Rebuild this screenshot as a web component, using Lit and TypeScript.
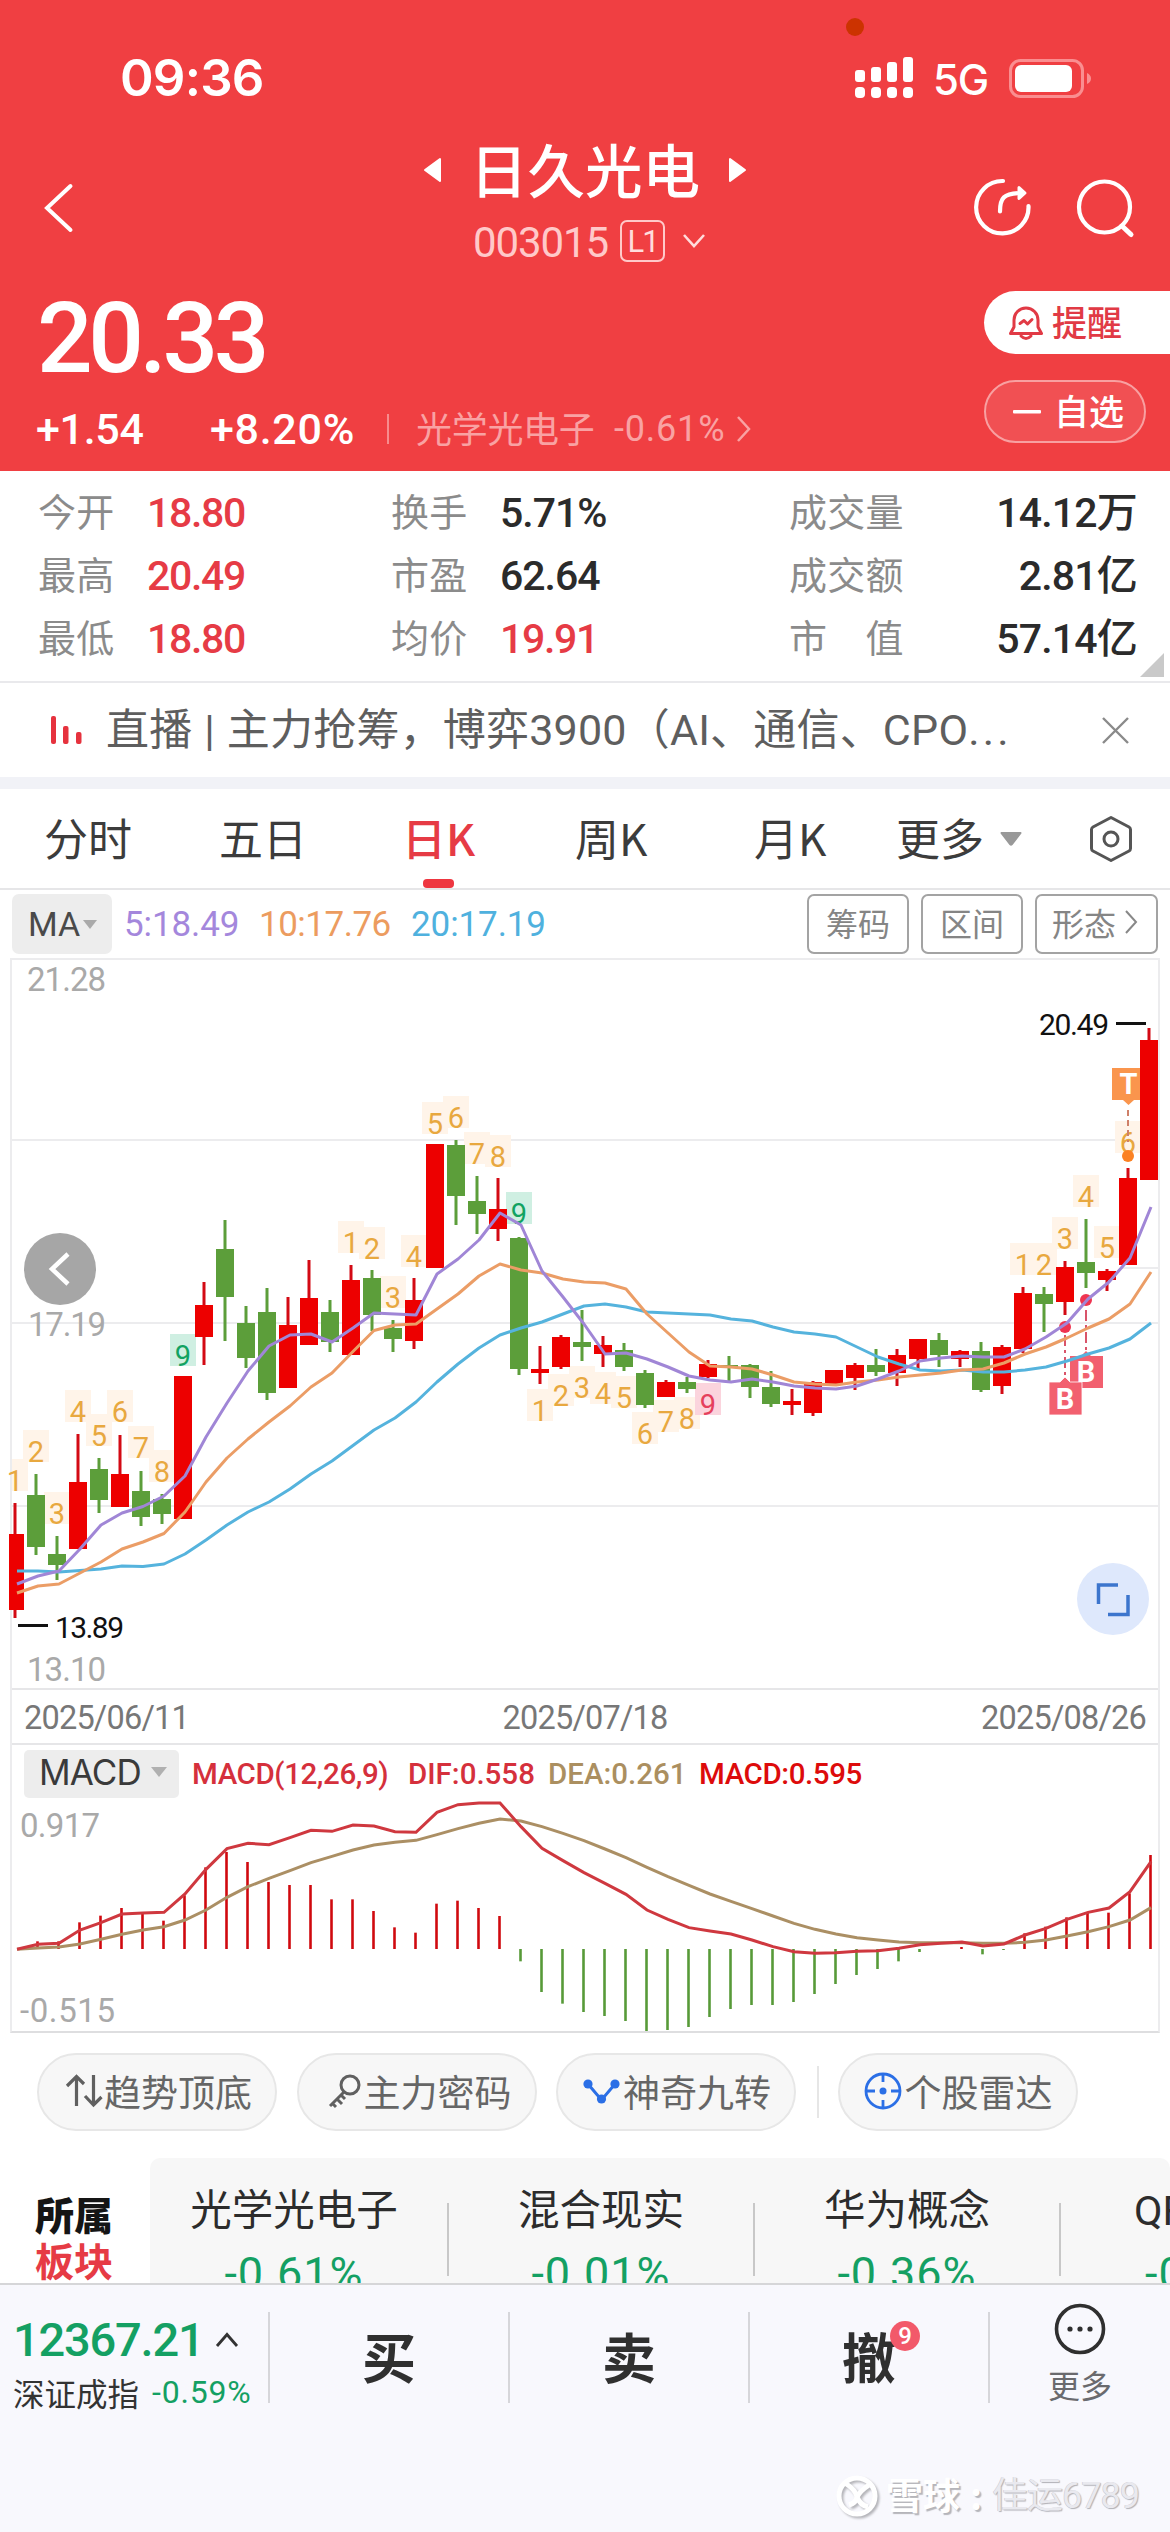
import { LitElement, html, svg, css, nothing } from "lit";
import { customElement } from "lit/decorators.js";

const STEP = 21;
const GRID_X = 15;
const LINE_X = 17;

type Candle = [up: number, high: number, top: number, bottom: number, low: number];

const CANDLES: Candle[] = [
  [1, 1503, 1534, 1610, 1618], [0, 1474, 1495, 1547, 1555], [0, 1536, 1554, 1565, 1580],
  [1, 1434, 1482, 1549, 1549], [0, 1458, 1469, 1500, 1513], [1, 1435, 1474, 1507, 1507],
  [0, 1471, 1491, 1517, 1526], [0, 1494, 1499, 1514, 1524], [1, 1376, 1376, 1519, 1519],
  [1, 1282, 1305, 1337, 1365], [0, 1220, 1249, 1297, 1341], [0, 1306, 1323, 1358, 1368],
  [0, 1288, 1312, 1393, 1400], [1, 1297, 1325, 1388, 1388], [1, 1260, 1298, 1345, 1345],
  [0, 1300, 1312, 1342, 1352], [1, 1265, 1280, 1355, 1355], [0, 1270, 1278, 1315, 1331],
  [0, 1320, 1328, 1339, 1352], [1, 1278, 1300, 1341, 1349], [1, 1144, 1144, 1268, 1268],
  [0, 1140, 1145, 1196, 1225], [0, 1176, 1201, 1214, 1234], [1, 1178, 1209, 1229, 1241],
  [0, 1237, 1238, 1369, 1375], [1, 1346, 1369, 1373, 1384], [1, 1335, 1337, 1367, 1369],
  [0, 1310, 1342, 1347, 1361], [1, 1336, 1345, 1354, 1367], [0, 1343, 1350, 1367, 1371],
  [0, 1370, 1373, 1405, 1408], [1, 1380, 1382, 1397, 1397], [0, 1377, 1382, 1389, 1393],
  [1, 1360, 1364, 1377, 1378], [0, 1356, 1365, 1367, 1382], [0, 1364, 1365, 1387, 1398],
  [0, 1371, 1387, 1404, 1407], [1, 1389, 1401, 1405, 1415], [1, 1381, 1382, 1413, 1416],
  [1, 1370, 1370, 1384, 1384], [1, 1363, 1365, 1378, 1390], [0, 1349, 1365, 1372, 1376],
  [1, 1349, 1355, 1373, 1386], [1, 1339, 1339, 1359, 1369], [0, 1333, 1340, 1355, 1367],
  [1, 1350, 1351, 1359, 1367], [0, 1342, 1351, 1390, 1392], [1, 1345, 1347, 1386, 1394],
  [1, 1287, 1293, 1349, 1353], [0, 1287, 1294, 1304, 1332], [1, 1261, 1267, 1302, 1315],
  [0, 1219, 1262, 1273, 1288], [1, 1269, 1271, 1280, 1291], [1, 1168, 1178, 1265, 1265],
  [1, 1028, 1040, 1180, 1180],
];

const MA5 = [1584, 1576, 1571, 1549, 1525, 1513, 1506.5, 1496, 1476, 1437, 1403, 1371, 1346, 1335, 1334, 1342, 1328, 1313, 1314, 1315, 1274, 1259, 1240, 1213, 1225, 1271, 1297, 1324, 1354, 1353, 1359, 1367, 1376, 1380, 1382, 1379, 1382, 1386, 1388, 1389, 1386, 1379, 1371, 1361, 1358, 1356, 1357, 1357, 1349, 1337, 1323, 1299, 1282, 1258, 1207];
const MA10 = [1593, 1586, 1584, 1573, 1562, 1549, 1542, 1533.5, 1512, 1482, 1458, 1439, 1422, 1406, 1387, 1373, 1351.5, 1330.5, 1325, 1324, 1309, 1294, 1276, 1264, 1270, 1273, 1279, 1282, 1283, 1289, 1314, 1333, 1352, 1366, 1367, 1369, 1375, 1382, 1384, 1385, 1382, 1380, 1377, 1375, 1373, 1370, 1369, 1363, 1354, 1347, 1338, 1328, 1319, 1304, 1272];
const MA20 = [1571, 1571, 1572, 1570.5, 1569, 1566, 1566.5, 1564, 1554, 1540, 1525, 1512, 1502, 1489, 1474, 1461, 1445.5, 1430, 1418, 1402, 1382, 1364, 1348, 1335, 1328, 1322, 1314, 1306, 1304, 1307, 1312, 1313, 1314, 1315, 1319, 1321, 1327, 1332, 1334, 1337, 1347, 1357, 1364, 1370, 1371, 1370, 1372, 1372, 1370, 1367, 1361, 1354, 1348, 1339, 1323];

// Setup counters: candle index, vertical centre, digit, tone.
const COUNTS: [number, number, string, string][] = [
  [0, 1480, "1", "amber"], [1, 1451, "2", "amber"], [2, 1513, "3", "amber"], [3, 1411, "4", "amber"],
  [4, 1435, "5", "amber"], [5, 1411, "6", "amber"], [6, 1447, "7", "amber"], [7, 1471, "8", "amber"],
  [8, 1355, "9", "mint"], [16, 1242, "1", "amber"], [17, 1248, "2", "amber"], [18, 1297, "3", "amber"],
  [19, 1256, "4", "amber"], [20, 1123, "5", "amber"], [21, 1117, "6", "amber"], [22, 1153, "7", "amber"],
  [23, 1156, "8", "amber"], [24, 1213, "9", "mint"], [25, 1410, "1", "amber"], [26, 1395, "2", "amber"],
  [27, 1387, "3", "amber"], [28, 1393, "4", "amber"], [29, 1397, "5", "amber"], [30, 1433, "6", "amber"],
  [31, 1421, "7", "amber"], [32, 1418, "8", "amber"], [33, 1404, "9", "rose"], [48, 1264, "1", "amber"],
  [49, 1264, "2", "amber"], [50, 1238, "3", "amber"], [51, 1196, "4", "amber"], [52, 1247, "5", "amber"],
  [53, 1142, "6", "amber"],
];

// MACD series in thirds of a pixel below y = 1560.
const ZERO = 1167;
const BARS = [0, 1144, 1144, 1087, 1067, 1044, 1060, 1082, 1006, 922, 876, 906, 966, 975, 975, 1018, 1018, 1053, 1102, 1118, 1031, 1022, 1044, 1068, 1204, 1296, 1331, 1356, 1368, 1383, 1413, 1410, 1401, 1371, 1347, 1335, 1335, 1326, 1302, 1272, 1245, 1227, 1204, 1176, 0, 1161, 1183, 1170, 1120, 1100, 1072, 1056, 1058, 1000, 885];
const DIF = [1168, 1153, 1150, 1110, 1088, 1062, 1059, 1057, 1002, 928, 866, 850, 854, 833, 811, 814, 795, 798, 815, 817, 757, 734, 729, 729, 800, 865, 902, 938, 970, 1003, 1050, 1078, 1103, 1113, 1122, 1140, 1160, 1175, 1180, 1178, 1174, 1172, 1165, 1154, 1150, 1146, 1158, 1152, 1125, 1105, 1078, 1057, 1044, 995, 905];
const DEA = [1168, 1164, 1161, 1152, 1138, 1123, 1110, 1100, 1080, 1050, 1012, 980, 955, 932, 908, 889, 870, 855, 847, 841, 824, 806, 790, 777, 783, 800, 820, 842, 867, 893, 922, 950, 976, 1002, 1024, 1046, 1068, 1090, 1108, 1122, 1133, 1140, 1146, 1148, 1148, 1148, 1150, 1150, 1147, 1140, 1128, 1115, 1100, 1080, 1043];

const macdY = (v: number) => 1560 + v / 3;
const polyline = (ys: number[]) => ys.map((y, i) => `${LINE_X + STEP * i},${y}`).join(" ");

const fontBase = css`
  :host { box-sizing: border-box; flex: none; }
  * { box-sizing: border-box; }
  svg { display: block; overflow: visible; flex: none; }
`;

@customElement("quote-header")
export class QuoteHeader extends LitElement {
  static styles = [fontBase, css`
    :host { display: block; height: 471px; background: #f03f42; color: #fff; position: relative; }
    .privacy { position: absolute; left: 846px; top: 18px; width: 18px; height: 18px; border-radius: 50%; background: #cc3300; }
    .status { height: 120px; padding: 36px 78px 0 120px; display: flex; align-items: center; }
    .clock { font: 600 51px/84px Inter, sans-serif; letter-spacing: -0.8px; flex: 1; }
    .signal { margin-right: 20px; }
    .network { font: 500 42px/84px Inter, sans-serif; letter-spacing: -1.2px; margin-right: 21px; padding-top: 4px; }
    .nav { height: 160px; display: grid; grid-template-columns: 423px 324px 1fr; }
    .back { padding: 64px 0 0 44px; }
    .center { display: flex; flex-direction: column; align-items: center; }
    .title-row { display: flex; width: 324px; height: 100px; justify-content: space-between; align-items: center; }
    .title { font: 500 57.5px/100px "Noto Sans CJK SC", sans-serif; margin-top: -4px; }
    .code-row { display: flex; align-items: center; height: 42px; align-self: flex-start; padding-left: 50px; }
    .code { font: 400 42px/42px Roboto, sans-serif; color: #ffc9c9; letter-spacing: -1.1px; width: 147px; padding-top: 3px; }
    .level { width: 45px; height: 42px; border: 2px solid #ffc9c9; border-radius: 7px; font: 400 31px/39px Roboto, sans-serif; text-align: center; color: #ffdcdc; margin-right: 18px; letter-spacing: -2px; }
    .tools { display: flex; gap: 44px; padding: 57px 0 0 226px; }
    .body { display: grid; grid-template-columns: 984px 1fr; height: 191px; }
    .price { font: 500 98px/110px Roboto, sans-serif; letter-spacing: -4.4px; padding: 4px 0 0 37px; height: 119px; }
    .delta { display: flex; align-items: center; height: 60px; padding-left: 36px; font: 500 43px/60px Roboto, sans-serif; letter-spacing: -0.3px; }
    .amount { width: 174px; }
    .percent { width: 177px; letter-spacing: 0.7px; }
    .rule { width: 2px; height: 30px; background: #f78c8d; margin-right: 27px; }
    .sector { font: 400 36px/54px "Noto Sans CJK SC", sans-serif; color: #f9a2a3; width: 198px; letter-spacing: -0.3px; margin-top: -4px; }
    .sector-pct { font: 400 36px/60px Roboto, sans-serif; color: #f9a2a3; width: 123px; letter-spacing: 0.8px; }
    .pills { padding-top: 11px; display: flex; flex-direction: column; gap: 26px; }
    .pill { height: 63px; display: flex; align-items: center; font: 500 35px/60px "Noto Sans CJK SC", sans-serif; }
    .pill span { margin-top: -3px; }
    .remind { background: #fff; color: #e13a45; border-radius: 32px 0 0 32px; padding-left: 25px; gap: 9px; }
    .watch { width: 162px; border: 2px solid #f8a0a1; background: #f15053; border-radius: 32px; padding-left: 27px; gap: 13px; }
  `];

  render() {
    return html`
      <i class="privacy"></i>
      <div class="status">
        <span class="clock">09:36</span>
        <svg class="signal" width="58" height="42" viewBox="0 0 58 42" fill="#fff">
          <rect x="0" y="13" width="10" height="12" rx="3"></rect><rect x="16" y="10" width="10" height="15" rx="3"></rect>
          <rect x="32" y="5" width="10" height="20" rx="3"></rect><rect x="48" y="0" width="10" height="25" rx="3"></rect>
          ${[0, 16, 32, 48].map((x) => svg`<rect x=${x} y="30" width="10" height="11" rx="4"></rect>`)}
        </svg>
        <span class="network">5G</span>
        <svg width="83" height="39" viewBox="0 0 83 39">
          <rect x="1.5" y="1.5" width="72" height="36" rx="10" fill="none" stroke="#fa8e90" stroke-width="3"></rect>
          <rect x="6" y="6" width="57" height="27" rx="6" fill="#fff"></rect>
          <path d="M78 14q4 2 4 5.500t-4 5.500z" fill="#fa8e90"></path>
        </svg>
      </div>
      <div class="nav">
        <div class="back"><svg width="30" height="48" viewBox="0 0 30 48"><path d="M26.500 2L3 24l23.500 22" fill="none" stroke="#fff" stroke-width="4" stroke-linecap="round"></path></svg></div>
        <div class="center">
          <div class="title-row">
            <svg width="18" height="26" viewBox="0 0 18 26"><path d="M17 2v22L2 13z" fill="#fff" stroke="#fff" stroke-width="2" stroke-linejoin="round"></path></svg>
            <span class="title">日久光电</span>
            <svg width="18" height="26" viewBox="0 0 18 26"><path d="M1 2v22l15-11z" fill="#fff" stroke="#fff" stroke-width="2" stroke-linejoin="round"></path></svg>
          </div>
          <div class="code-row">
            <span class="code">003015</span><span class="level">L1</span>
            <svg width="22" height="14" viewBox="0 0 22 14"><path d="M1 1l10 11L21 1" fill="none" stroke="#ffdcdc" stroke-width="2.600"></path></svg>
          </div>
        </div>
        <div class="tools">
          <svg width="60" height="60" viewBox="0 0 60 60" fill="none" stroke="#fff" stroke-width="4.200" stroke-linecap="round">
            <path d="M30 4A26.200 26.200 0 1 0 55.500 29"></path><path d="M27 34.500c0-13 3-18.500 22-18.500"></path>
            <path d="M46 10.500l6 5.500-6 5.500z" fill="#fff" stroke-linejoin="round" stroke-width="3"></path>
          </svg>
          <svg width="60" height="60" viewBox="0 0 60 60" fill="none" stroke="#fff" stroke-width="4.200" stroke-linecap="round">
            <circle cx="27.500" cy="30" r="25.500"></circle><path d="M45 49l9 8.500" stroke-width="5"></path>
          </svg>
        </div>
      </div>
      <div class="body">
        <div>
          <div class="price">20.33</div>
          <div class="delta">
            <span class="amount">+1.54</span><span class="percent">+8.20%</span><i class="rule"></i>
            <span class="sector">光学光电子</span><span class="sector-pct">-0.61%</span>
            <svg width="14" height="26" viewBox="0 0 14 26"><path d="M1 1l11 12L1 25" fill="none" stroke="#f9a2a3" stroke-width="2.500"></path></svg>
          </div>
        </div>
        <div class="pills">
          <div class="pill remind">
            <svg width="34" height="36" viewBox="0 0 34 36" fill="none" stroke="#e13a45" stroke-width="3" stroke-linejoin="round" stroke-linecap="round">
              <path d="M5 22V15a12 12 0 0 1 24 0v7l3.500 6.500H1.500z"></path><path d="M12 31q5 5 10 0"></path><path d="M11 18.500l4-3 3.500 3.500 4.500-4.500"></path>
            </svg>
            <span>提醒</span>
          </div>
          <div class="pill watch">
            <svg width="28" height="4" viewBox="0 0 28 4"><rect width="28" height="3.500" rx="1" fill="#fff"></rect></svg>
            <span>自选</span>
          </div>
        </div>
      </div>`;
  }
}

@customElement("quote-stats")
export class QuoteStats extends LitElement {
  static styles = [fontBase, css`
    :host { display: block; background: #fff; }
    .stats { height: 212px; padding: 9px 33px 0 38px; border-bottom: 2px solid #e9e9ec; position: relative;
      display: grid; grid-template-columns: 109px 244px 109px 289px 118px 1fr; grid-template-rows: repeat(3, 63px); align-items: center; }
    .label { font: 400 38px/60px "Noto Sans CJK SC", sans-serif; color: #8b8b8b; white-space: pre; letter-spacing: 0.2px; padding-bottom: 3px; }
    .value { font: 500 41px/63px Roboto, "Noto Sans CJK SC", sans-serif; color: #2b2b2b; letter-spacing: -1px; padding-top: 4px; }
    .rise { color: #e63b45; letter-spacing: -1.3px; }
    .last { text-align: right; white-space: nowrap; letter-spacing: -0.8px; }
    .corner { position: absolute; right: 6px; bottom: 4px; width: 24px; height: 24px; background: #c9c9c9; clip-path: polygon(100% 0, 100% 100%, 0 100%); }
    .news { height: 94px; display: flex; align-items: center; padding: 0 41px 0 51px; }
    .news-text { font: 400 43px/94px Roboto, "Noto Sans CJK SC", sans-serif; color: #5e5e5e; margin-left: 24px; flex: 1; white-space: nowrap; letter-spacing: 0.2px; }
    .bar { margin: 0 1px; }
    .dots { letter-spacing: 3.200px; }
    .band { height: 12px; background: #f1f2f7; }
  `];

  private rows = [
    ["今开", "18.80", 1, "换手", "5.71%", 0, "成交量", "14.12万"],
    ["最高", "20.49", 1, "市盈", "62.64", 0, "成交额", "2.81亿"],
    ["最低", "18.80", 1, "均价", "19.91", 1, "市　值", "57.14亿"],
  ];

  render() {
    return html`
      <div class="stats">
        ${this.rows.map(([a, av, ar, b, bv, br, c, cv]) => html`
          <span class="label">${a}</span><span class="value ${ar ? "rise" : ""}">${av}</span>
          <span class="label">${b}</span><span class="value ${br ? "rise" : ""}">${bv}</span>
          <span class="label">${c}</span><span class="value last">${cv}</span>`)}
        <i class="corner"></i>
      </div>
      <div class="news">
        <svg width="31" height="28" viewBox="0 0 31 28" fill="#e6323e">
          <rect x="0" y="0" width="5" height="28" rx="2"></rect><rect x="12" y="10" width="5.500" height="18" rx="2"></rect><rect x="25" y="16" width="5.500" height="12" rx="2"></rect>
        </svg>
        <span class="news-text">直播 <span class="bar">|</span> 主力抢筹，博弈3900（AI、通信、CPO<span class="dots">...</span></span>
        <svg width="27" height="27" viewBox="0 0 27 27"><path d="M1 1l25 25M26 1L1 26" stroke="#8a8a8a" stroke-width="2.400"></path></svg>
      </div>
      <div class="band"></div>`;
  }
}

@customElement("period-tabs")
export class PeriodTabs extends LitElement {
  static styles = [fontBase, css`
    :host { display: block; background: #fff; }
    .tabs { height: 101px; border-bottom: 2px solid #e6e6e8; padding-left: 44px; display: grid; align-items: center;
      grid-template-columns: 175px 183px 173px 179px 142px 193px 1fr; font: 400 44px/96px "Noto Sans CJK SC", sans-serif; color: #3c3c3c; }
    .tab { white-space: nowrap; display: flex; align-items: center; height: 99px; padding-bottom: 3px; }
    .active { color: #e63b45; font-weight: 500; position: relative; }
    .active::after { content: ""; position: absolute; left: 21px; bottom: 0; width: 31px; height: 9px; border-radius: 4px; background: #ee3640; }
    .down { margin: 4px 0 0 16px; }
    .tools { height: 68px; display: flex; align-items: center; padding: 0 12px; }
    .ma { width: 100px; height: 60px; background: #ededed; border-radius: 7px; padding-left: 16px; display: flex; align-items: center; gap: 3px; font: 400 34px/60px Roboto, sans-serif; color: #4a4a4a; margin-right: 12px; }
    .series { font: 400 35px/60px Roboto, sans-serif; letter-spacing: -0.1px; white-space: nowrap; padding-top: 1px; }
    .v5 { color: #a487dc; width: 135px; }
    .v10 { color: #ec9c5f; width: 152px; letter-spacing: -0.5px; }
    .v20 { color: #4fb1de; flex: 1; }
    .key { height: 60px; border: 2px solid #a3a3a3; border-radius: 7px; font: 400 32px/52px "Noto Sans CJK SC", sans-serif; color: #858585; display: flex; justify-content: center; align-items: center; width: 102px; margin-left: 12px; gap: 9px; padding-bottom: 5px; }
    .wide { width: 123px; padding-right: 3px; }
  `];

  render() {
    return html`
      <div class="tabs">
        <span class="tab">分时</span><span class="tab">五日</span><span class="tab active">日K</span><span class="tab">周K</span><span class="tab">月K</span>
        <span class="tab">更多<svg class="down" width="22" height="14" viewBox="0 0 22 14"><path d="M1 0h20q1 1 0 2L12.500 13q-1.500 1.500-3 0L1 2q-1-1 0-2z" fill="#999"></path></svg></span>
        <svg width="44" height="48" viewBox="0 0 44 48" fill="none" stroke="#555" stroke-width="3" stroke-linejoin="round">
          <path d="M22 2.500L40 12q1.500 1 1.500 2.500v19q0 1.500-1.500 2.500L22 45.500 4 36q-1.500-1-1.500-2.500v-19Q2.500 13 4 12z"></path><circle cx="22" cy="24" r="7"></circle>
        </svg>
      </div>
      <div class="tools">
        <span class="ma">MA<svg width="14" height="9" viewBox="0 0 14 9"><path d="M0 0h14L7 9z" fill="#aaa"></path></svg></span>
        <span class="series v5">5:18.49</span><span class="series v10">10:17.76</span><span class="series v20">20:17.19</span>
        <span class="key">筹码</span><span class="key">区间</span>
        <span class="key wide">形态<svg width="13" height="24" viewBox="0 0 13 24"><path d="M1 1l10 11L1 23" fill="none" stroke="#888" stroke-width="2"></path></svg></span>
      </div>`;
  }
}

@customElement("kline-chart")
export class KlineChart extends LitElement {
  static styles = [fontBase, css`
    :host { display: block; background: #fff; height: 1077px; padding: 0 10px; }
    .frame { border: 2px solid #ececee; border-bottom-color: #dedee0; height: 1075px; position: relative; }
    .num { font-family: Roboto, sans-serif; }
    .axis { fill: #a9a9a9; font-size: 33px; }
    .peak { fill: #111; font-size: 30px; }
    .count { font-size: 29px; text-anchor: middle; font-weight: 400; }
    .amber { fill: #e8a83f; } .amber-box { fill: #fff4e9; }
    .mint { fill: #12a261; } .mint-box { fill: #cfefe2; }
    .rose { fill: #e5405c; } .rose-box { fill: #fbd4dd; }
    .flag { font-size: 29px; font-weight: 700; fill: #fff; text-anchor: middle; }
    .dates { height: 57px; border-top: 2px solid #e6e6e8; border-bottom: 2px solid #e6e6e8; display: flex; justify-content: space-between; padding: 2px 12px 0 12px; font: 400 32.500px/53px Roboto, sans-serif; color: #777; letter-spacing: -0.8px; }
    .legend { height: 57px; display: flex; align-items: center; padding-left: 12px; font: 500 29.500px/54px Roboto, sans-serif; white-space: nowrap; }
    .picker { width: 155px; height: 48px; background: #ededed; border-radius: 5px; font: 400 35px/44px Inter, sans-serif; color: #3a3a3a; display: flex; align-items: center; padding-left: 15px; gap: 10px; margin-right: 13px; letter-spacing: -0.9px; padding-bottom: 3px; }
    .l1 { color: #d5303c; width: 216px; letter-spacing: -0.4px; } .l2 { color: #d5303c; width: 140px; letter-spacing: 0; }
    .l3 { color: #ab8f60; width: 151px; letter-spacing: 0; } .l4 { color: #dd0b0b; letter-spacing: -0.4px; }
    .prev { position: absolute; left: 12px; top: 273px; }
    .expand { position: absolute; left: 1065px; top: 603px; }
  `];

  private candle([up, high, top, bottom, low]: Candle, i: number) {
    const x = GRID_X + STEP * i;
    const left = i === 0 ? 9 : x - 9;
    return svg`<g fill=${up ? "#ed0000" : "#5c9e3a"}>
      <rect x=${x - 1.5} y=${high} width="3" height=${low - high} fill=${up ? "#d30a14" : "#5c9e3a"}></rect>
      <rect x=${left} y=${top} width=${x + 9 - left} height=${bottom - top}></rect></g>`;
  }

  private count([i, cy, , tone]: [number, number, string, string]) {
    const x = GRID_X + STEP * i;
    return svg`<rect class="${tone}-box" x=${i === 0 ? 12 : x - 13} y=${cy - 21} width=${i === 0 ? 16 : 26} height="32"></rect>`;
  }

  private digit([i, cy, digit, tone]: [number, number, string, string]) {
    return svg`<text class="num count ${tone}" x=${GRID_X + STEP * i} y=${cy + 10.5}>${digit}</text>`;
  }

  render() {
    return html`
      <div class="frame">
        <svg width="1146" height="728" viewBox="12 960 1146 728">
          <g stroke="#ececee" stroke-width="2"><path d="M12 1140H1158M12 1323H1158M12 1506H1158M1120 1268H1158"></path></g>
          <text class="num axis" x="27" y="991" textLength="79">21.28</text>
          <text class="num axis" x="28" y="1336" textLength="78">17.19</text>
          <text class="num axis" x="27" y="1681" textLength="79">13.10</text>
          ${COUNTS.map((c) => this.count(c))}
          ${COUNTS.map((c) => this.digit(c))}
          <path d="M1112 1068h33v32h-11l-5.500 5-5.500-5h-11z" fill="#fa954d"></path>
          <text class="num flag" x="1128.500" y="1094">T</text>
          <path d="M1128 1110V1142" stroke="#cf8068" stroke-width="2" stroke-dasharray="6 4"></path>
          ${CANDLES.map((c, i) => this.candle(c, i))}
          <circle cx="1128" cy="1156" r="6" fill="#fb8122"></circle>
          <path d="M1065 1335V1378M1086 1310V1350" stroke="#d9546a" stroke-width="2" stroke-dasharray="11 4 3 4"></path>
          <circle cx="1065" cy="1327" r="6" fill="#ef3450"></circle><circle cx="1086" cy="1300" r="6" fill="#ef3450"></circle>
          <path d="M1070 1356h11l5-5 5 5h12v32h-33z" fill="#f2606f"></path><text class="num flag" x="1086" y="1382">B</text>
          <path d="M1049 1382h11l5-5 5 5h12v33h-33z" fill="#f2606f" stroke="#fff" stroke-width="0.800"></path><text class="num flag" x="1065" y="1409">B</text>
          <g fill="none" stroke-width="3" stroke-linejoin="round">
            <polyline points=${polyline(MA20)} stroke="#55b3dd"></polyline>
            <polyline points=${polyline(MA10)} stroke="#eb9d66"></polyline>
            <polyline points=${polyline(MA5)} stroke="#a086d6"></polyline>
          </g>
          <path d="M1116 1023.500h30M18 1625.500h30" stroke="#111" stroke-width="3"></path>
          <text class="num peak" x="1039" y="1035" textLength="70">20.49</text>
          <text class="num peak" x="55" y="1638" textLength="69">13.89</text>
        </svg>
        <div class="dates"><span>2025/06/11</span><span>2025/07/18</span><span>2025/08/26</span></div>
        <div class="legend">
          <span class="picker">MACD<svg width="16" height="10" viewBox="0 0 16 10"><path d="M0 0h16L8 10z" fill="#b0b0b0"></path></svg></span>
          <span class="l1">MACD(12,26,9)</span><span class="l2">DIF:0.558</span><span class="l3">DEA:0.261</span><span class="l4">MACD:0.595</span>
        </div>
        <svg width="1146" height="229" viewBox="12 1802 1146 229">
          <text class="num axis" x="20" y="1837" textLength="80">0.917</text>
          <text class="num axis" x="20" y="2022" textLength="95">-0.515</text>
          ${BARS.map((v, i) => v === 0 ? nothing : svg`<path d="M${16.5 + STEP * i} ${macdY(ZERO)}V${macdY(v)}" stroke=${v < ZERO ? "#d0090f" : "#579a38"} stroke-width="2.600"></path>`)}
          <polyline points=${polyline(DEA.map(macdY))} fill="none" stroke="#ab8f64" stroke-width="3"></polyline>
          <polyline points=${polyline(DIF.map(macdY))} fill="none" stroke="#cf383f" stroke-width="3"></polyline>
        </svg>
        <svg class="prev" width="72" height="72" viewBox="0 0 72 72"><circle cx="36" cy="36" r="36" fill="#a6a6a6"></circle><path d="M44 21L28 36l16 15" fill="none" stroke="#fff" stroke-width="4.500"></path></svg>
        <svg class="expand" width="72" height="72" viewBox="0 0 72 72"><circle cx="36" cy="36" r="36" fill="#dee8fc"></circle><path d="M41 22H21.500V41M31 51.500H51V32" fill="none" stroke="#3c75cd" stroke-width="3.500"></path></svg>
      </div>`;
  }
}

@customElement("feature-chips")
export class FeatureChips extends LitElement {
  static styles = [fontBase, css`
    :host { display: flex; height: 123px; padding: 18px 0 0 37px; background: #fff; align-items: flex-start; }
    .chip { width: 240px; height: 78px; margin-right: 19.500px; border: 2px solid #e7e7e7; background: #f7f7f7; border-radius: 39px; display: flex; align-items: center; justify-content: flex-end; padding: 0 23px 2px 0; gap: 2px; font: 400 37px/70px "Noto Sans CJK SC", sans-serif; color: #666; white-space: nowrap; }
    .gap { width: 2px; height: 52px; background: #e6e6e6; margin: 13px 19px 0 1px; }
  `];

  render() {
    return html`
      <div class="chip"><svg width="37" height="34" viewBox="0 0 37 34" fill="none" stroke="#606060" stroke-width="3.200"><path d="M11.500 32V3M2 12L11.500 2.500 19 10M28.500 1v29M20 22l8.500 9 8-8"></path></svg>趋势顶底</div>
      <div class="chip"><svg width="34" height="34" viewBox="0 0 34 34" fill="none" stroke="#606060" stroke-width="3"><circle cx="22" cy="11" r="9"></circle><path d="M16 18L2 32M9 25l5 5M4 29l4 4M13 21l4 4"></path></svg>主力密码</div>
      <div class="chip"><svg width="38" height="27" viewBox="0 0 38 27" fill="#2b6fe6"><path d="M5 6l13.500 16L32 6" fill="none" stroke="#2b6fe6" stroke-width="3"></path><circle cx="5" cy="6" r="4.600"></circle><circle cx="32" cy="6" r="4.600"></circle><circle cx="18.500" cy="21" r="4.600"></circle></svg>神奇九转</div>
      <i class="gap"></i>
      <div class="chip"><svg width="38" height="40" viewBox="0 0 38 40" fill="none" stroke="#2b6fe6" stroke-width="2.800"><circle cx="18" cy="20" r="17"></circle><path d="M18 3v8M18 29v8M1 20h9M26 20h9"></path><circle cx="18" cy="20" r="3.500" fill="#2b6fe6" stroke="none"></circle></svg>个股雷达</div>`;
  }
}

@customElement("sector-strip")
export class SectorStrip extends LitElement {
  static styles = [fontBase, css`
    :host { display: flex; height: 125px; overflow: hidden; background: #fff; }
    .heading { width: 150px; padding: 32px 0 0 35px; font: 900 39px/46px "Noto Sans CJK SC", sans-serif; color: #151515; flex: none; }
    .heading em { font-style: normal; color: #e63b45; display: block; font-weight: 700; }
    .card { width: 1020px; height: 170px; background: #f7f7f7; border-radius: 10px; display: grid; grid-template-columns: 299px 306px 306px 306px; overflow: hidden; flex: none; padding-top: 26px; }
    .cell { position: relative; text-align: center; padding-right: 11px; }
    .cell + .cell { padding: 0 2px 0 0; }
    .cell::after { content: ""; position: absolute; right: 0; top: 19px; width: 2px; height: 73px; background: #c8c8c8; }
    .name { font: 400 41.500px/54px Roboto, "Noto Sans CJK SC", sans-serif; color: #2c2c2c; }
    .pct { font: 400 45px/50px Roboto, sans-serif; color: #14a063; letter-spacing: 1px; margin-top: 11px; }
    .cell.partial { text-align: left; padding-left: 73px; }
    .partial .pct { padding-left: 11px; }
  `];

  render() {
    const cells = [["光学光电子", "-0.61%"], ["混合现实", "-0.01%"], ["华为概念", "-0.36%"]];
    return html`
      <div class="heading">所属<em>板块</em></div>
      <div class="card">
        ${cells.map(([n, p]) => html`<div class="cell"><div class="name">${n}</div><div class="pct">${p}</div></div>`)}
        <div class="cell partial"><div class="name">QF</div><div class="pct">-0</div></div>
      </div>`;
  }
}

@customElement("trade-bar")
export class TradeBar extends LitElement {
  static styles = [fontBase, css`
    :host { display: block; height: 249px; background: #f8f8fd; border-top: 2px solid #d6d6d8; }
    .bar { display: grid; grid-template-columns: 270px 240px 240px 240px 180px; padding-top: 27px; height: 154px; }
    .index { border-right: 2px solid #d6d6da; height: 91px; padding-left: 13px; }
    .line { display: flex; align-items: center; white-space: nowrap; }
    .points { font: 500 47px/56px Roboto, sans-serif; color: #14a063; letter-spacing: -1.2px; width: 203px; height: 56px; }
    .name { font: 400 31.500px/40px "Noto Sans CJK SC", sans-serif; color: #333; width: 139px; }
    .pct { font: 400 32px/40px Roboto, sans-serif; color: #14a063; letter-spacing: 0.8px; }
    .second { margin-top: 4px; }
    .act { height: 91px; border-right: 2px solid #d6d6da; font: 700 54px/87px "Noto Sans CJK SC", sans-serif; color: #303030; text-align: center; position: relative; }
    .badge { position: absolute; left: 140px; top: 9px; width: 30px; height: 30px; border-radius: 50%; background: #f2596a; color: #fff; font: 500 24px/31px Roboto, sans-serif; }
    .more { display: flex; flex-direction: column; align-items: center; margin-top: -8px; font: 400 32px/40px "Noto Sans CJK SC", sans-serif; color: #6a6a6e; gap: 10px; }
    .mark { display: flex; align-items: center; padding: 34px 0 0 836px; height: 80px; font: 700 37px/44px "Noto Sans CJK SC", sans-serif; color: #fff; text-shadow: 2px 2px 1px #b5b5ba; white-space: nowrap; }
    .brand { margin-top: -5px; width: 74px; }
    .colon { margin-top: -5px; width: 32px; text-align: center; }
    .logo { filter: drop-shadow(2px 2px 1px #b5b5ba); margin-right: 8px; }
    .user { font: 400 36px/44px Roboto, "Noto Sans CJK SC", sans-serif; color: #e9e9ef; text-shadow: 1px 1px 1px #b0b0b6, -0.500px -0.500px 0 #c9c9cf; letter-spacing: -1px; }
  `];

  render() {
    return html`
      <div class="bar">
        <div class="index">
          <div class="line"><span class="points">12367.21</span><svg width="22" height="14" viewBox="0 0 22 14"><path d="M1 13L11 1.500 21 13" fill="none" stroke="#333" stroke-width="2.800"></path></svg></div>
          <div class="line second"><span class="name">深证成指</span><span class="pct">-0.59%</span></div>
        </div>
        <div class="act">买</div><div class="act">卖</div><div class="act">撤<span class="badge">9</span></div>
        <div class="more">
          <svg width="50" height="50" viewBox="0 0 50 50"><circle cx="25" cy="25" r="23.500" fill="none" stroke="#2f2f2f" stroke-width="3.600"></circle><g fill="#2f2f2f"><circle cx="15" cy="25" r="2.600"></circle><circle cx="25" cy="25" r="2.600"></circle><circle cx="35" cy="25" r="2.600"></circle></g></svg>
          <span>更多</span>
        </div>
      </div>
      <div class="mark">
        <svg class="logo" width="42" height="42" viewBox="0 0 42 42" fill="none" stroke="#fff" stroke-width="5"><circle cx="21" cy="21" r="18"></circle><path d="M9 8q11 7 12 14-1 6-8 8M33 10q-9 6-12 12 3 8 11 10"></path></svg>
        <span class="brand">雪球</span><span class="colon">:</span><span class="user">佳运6789</span>
      </div>`;
  }
}

@customElement("app-root")
export class AppRoot extends LitElement {
  static styles = css`
    :host { display: flex; flex-direction: column; width: 1170px; height: 2532px; overflow: hidden; background: #fff; }
  `;

  render() {
    return html`
      <quote-header></quote-header>
      <quote-stats></quote-stats>
      <period-tabs></period-tabs>
      <kline-chart></kline-chart>
      <feature-chips></feature-chips>
      <sector-strip></sector-strip>
      <trade-bar></trade-bar>`;
  }
}
